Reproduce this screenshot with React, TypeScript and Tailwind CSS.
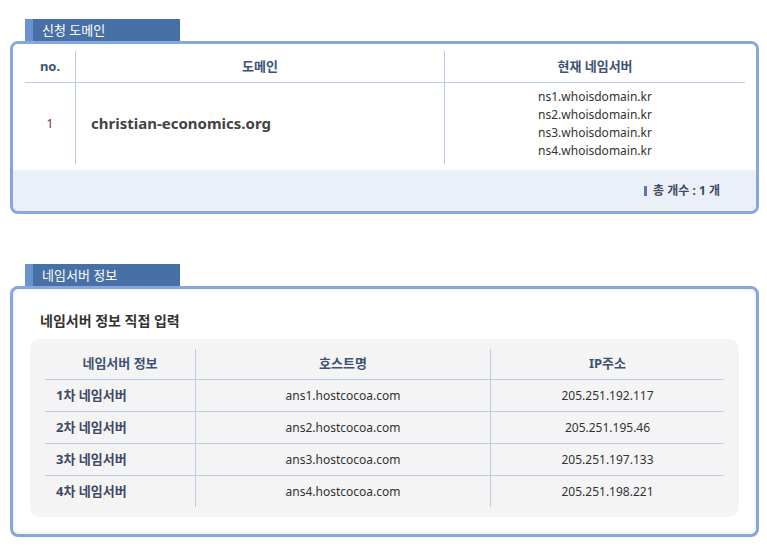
const font = { fontFamily: '"Noto Sans", "Noto Sans CJK KR", sans-serif' };

const nameServers = [
  "ns1.whoisdomain.kr",
  "ns2.whoisdomain.kr",
  "ns3.whoisdomain.kr",
  "ns4.whoisdomain.kr",
];

const hosts = [
  { label: "1차 네임서버", host: "ans1.hostcocoa.com", ip: "205.251.192.117" },
  { label: "2차 네임서버", host: "ans2.hostcocoa.com", ip: "205.251.195.46" },
  { label: "3차 네임서버", host: "ans3.hostcocoa.com", ip: "205.251.197.133" },
  { label: "4차 네임서버", host: "ans4.hostcocoa.com", ip: "205.251.198.221" },
];

function Tab({ title }: { title: string }) {
  return (
    <div className="ml-[25px] flex h-[22px] w-[155px] bg-[#4771a6]">
      <div className="w-[8px] bg-[#6b93cf]" />
      <span className="pl-[9px] text-[13px] leading-[22px] text-white">{title}</span>
    </div>
  );
}

export default function App() {
  return (
    <div className="min-h-[548px] w-[767px] bg-white pt-[19px]" style={font}>
      {/* 신청 도메인 */}
      <Tab title="신청 도메인" />
      <div className="ml-[10px] w-[749px] overflow-hidden rounded-[8px] border-[3px] border-[#86a6df] shadow-[inset_0_0_4px_rgba(0,0,0,0.12)]">
        <div className="bg-white pl-[12px] pr-[11px] pt-[7px] pb-[6px]">
          <div className="flex border-b border-[#b9cbe8] text-[13px] font-bold text-[#3e5275]">
            <div className="flex h-[31px] w-[51px] items-center justify-center border-r border-[#b9cbe8]">no.</div>
            <div className="flex h-[31px] w-[369px] items-center justify-center border-r border-[#b9cbe8]">도메인</div>
            <div className="flex h-[31px] flex-1 items-center justify-center">현재 네임서버</div>
          </div>
          <div className="flex">
            <div className="flex h-[81px] w-[51px] items-center justify-center border-r border-[#b9cbe8] text-[12px] text-[#6b2e5e]">1</div>
            <div className="flex h-[81px] w-[369px] items-center border-r border-[#b9cbe8] pl-[15px] text-[15px] font-bold text-[#444]">
              christian-economics.org
            </div>
            <div className="flex flex-1 flex-col items-center justify-center text-[12px] leading-[18px] text-[#333]">
              {nameServers.map((ns) => (
                <div key={ns}>{ns}</div>
              ))}
            </div>
          </div>
        </div>
        <div className="flex h-[41px] items-center justify-end bg-[#ebeff8] pr-[36px] text-[12px] font-bold text-[#3e4a63]">
          <span className="mr-[6px] inline-block h-[10px] w-[3px] bg-[#5a77a8]" />
          총 개수 : 1 개
        </div>
      </div>

      <div className="h-[50px]" />

      {/* 네임서버 정보 */}
      <Tab title="네임서버 정보" />
      <div className="ml-[10px] w-[749px] rounded-[8px] border-[3px] border-[#86a6df] bg-white px-[17px] pt-[21px] pb-[17px] shadow-[inset_0_0_4px_rgba(0,0,0,0.12)]">
        <h2 className="pl-[10px] text-[14px] font-bold text-[#333]">네임서버 정보 직접 입력</h2>
        <div className="mt-[8px] rounded-[10px] bg-[#f4f4f4] px-[15px] py-[10px]">
          <div className="flex border-b border-[#b9cbe8] text-[13px] font-bold text-[#3e5275]">
            <div className="flex h-[30px] w-[151px] items-center justify-center border-r border-[#b9cbe8]">네임서버 정보</div>
            <div className="flex h-[30px] w-[295px] items-center justify-center border-r border-[#b9cbe8]">호스트명</div>
            <div className="flex h-[30px] flex-1 items-center justify-center">IP주소</div>
          </div>
          {hosts.map((h, i) => (
            <div key={h.label} className={`flex ${i < hosts.length - 1 ? "border-b border-[#b9cbe8]" : ""}`}>
              <div className="flex h-[31px] w-[151px] items-center border-r border-[#b9cbe8] pl-[11px] text-[13px] font-bold text-[#3e4a63]">
                {h.label}
              </div>
              <div className="flex h-[31px] w-[295px] items-center justify-center border-r border-[#b9cbe8] text-[12px] text-[#333]">
                {h.host}
              </div>
              <div className="flex h-[31px] flex-1 items-center justify-center text-[12px] text-[#333]">{h.ip}</div>
            </div>
          ))}
        </div>
      </div>
    </div>
  );
}
